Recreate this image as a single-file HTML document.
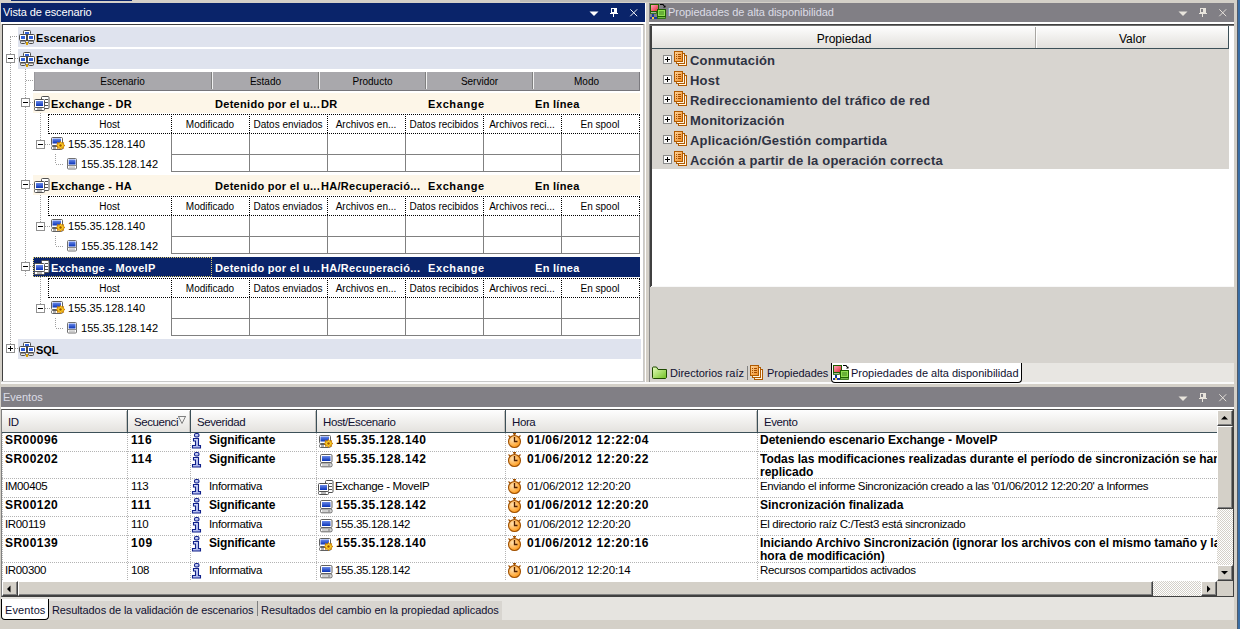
<!DOCTYPE html><html><head><meta charset="utf-8"><style>
html,body{margin:0;padding:0;width:1240px;height:629px;overflow:hidden;background:#d4d0c8}
body{position:relative;font-family:"Liberation Sans",sans-serif;font-size:11px}
div,svg{position:absolute}
.t{white-space:nowrap;line-height:13px}
</style></head><body><div style="left:0px;top:0px;width:1240px;height:629px;background:#d4d0c8"></div>
<div style="left:11px;top:0px;width:121px;height:1px;background:#0a246a"></div>
<div style="left:520px;top:0px;width:280px;height:2px;background:#bdbbb8"></div>
<div style="left:1px;top:3px;width:644px;height:19px;background:#0a246a"></div>
<div class="t" style="left:3px;top:6px;color:#fff;font-size:11px;letter-spacing:-0.1px">Vista de escenario</div>
<svg style="left:586px;top:5px" width="56" height="14" viewBox="0 0 56 14"><path d="M3.5 6.5 L12.5 6.5 L8 11 Z" fill="#fff"/><rect x="25" y="3" width="6" height="5" fill="#fff"/><rect x="26" y="4" width="2" height="3" fill="#0a246a"/><rect x="24" y="8" width="8" height="1" fill="#fff"/><rect x="27" y="9" width="1" height="3" fill="#fff"/><path d="M44.3 4.3 L51.2 11.2 M51.2 4.3 L44.3 11.2" stroke="#fff" stroke-width="0.95"/></svg>
<div style="left:1px;top:22px;width:644px;height:2px;background:#fff"></div>
<div style="left:2px;top:24px;width:642px;height:358px;background:#fff;border-top:1px solid #404040;border-left:1px solid #404040;border-right:1px solid #c8c8c8;border-bottom:1px solid #c8c8c8;box-sizing:border-box"></div>
<div style="left:645px;top:3px;width:1px;height:380px;background:#fff"></div>
<div style="left:18px;top:27px;width:623px;height:20px;background:#dfe3ee"></div>
<div style="left:10px;top:36px;width:8px;height:1px;background:repeating-linear-gradient(to right,#a0a0a0 0 1px,transparent 1px 2px) 0px 0"></div>
<div style="left:10px;top:37px;width:1px;height:309px;background:repeating-linear-gradient(to bottom,#a0a0a0 0 1px,transparent 1px 2px) 0 0px"></div>
<svg style="left:17px;top:28px" width="20" height="20" viewBox="0 0 20 20">
<rect x="6.5" y="2.5" width="7" height="4" rx="1" fill="#fff" stroke="#4a4a4a"/><rect x="8" y="4" width="4" height="2.5" fill="#2f5fd8"/>
<rect x="2.5" y="6.5" width="7" height="6" rx="1" fill="#fff" stroke="#4a4a4a"/><rect x="4" y="8" width="4" height="3" fill="#2f5fd8"/>
<rect x="10.5" y="6.5" width="7" height="6" rx="1" fill="#fff" stroke="#4a4a4a"/><rect x="12" y="8" width="4" height="3" fill="#2f5fd8"/>
<rect x="3.5" y="13" width="5" height="2.5" rx="1" fill="#e8e8e8" stroke="#4a4a4a"/><rect x="11.5" y="13" width="5" height="2.5" rx="1" fill="#e8e8e8" stroke="#4a4a4a"/>
<rect x="9" y="6" width="2" height="7" fill="#4a4a4a"/><rect x="9" y="14" width="2" height="3" fill="#d8a000"/></svg>
<div class="t" style="left:36px;top:32px;font-weight:bold;font-size:11px;letter-spacing:0.1px">Escenarios</div>
<div style="left:18px;top:49px;width:623px;height:20px;background:#dfe3ee"></div>
<div style="left:6px;top:54px;width:9px;height:9px;box-sizing:border-box;border:1px solid #919191;background:#fff"></div><div style="left:8px;top:58px;width:5px;height:1px;background:#000"></div>
<div style="left:15px;top:58px;width:3px;height:1px;background:repeating-linear-gradient(to right,#a0a0a0 0 1px,transparent 1px 2px) 0px 0"></div>
<svg style="left:17px;top:50px" width="20" height="20" viewBox="0 0 20 20">
<rect x="6.5" y="2.5" width="7" height="4" rx="1" fill="#fff" stroke="#4a4a4a"/><rect x="8" y="4" width="4" height="2.5" fill="#2f5fd8"/>
<rect x="2.5" y="6.5" width="7" height="6" rx="1" fill="#fff" stroke="#4a4a4a"/><rect x="4" y="8" width="4" height="3" fill="#2f5fd8"/>
<rect x="10.5" y="6.5" width="7" height="6" rx="1" fill="#fff" stroke="#4a4a4a"/><rect x="12" y="8" width="4" height="3" fill="#2f5fd8"/>
<rect x="3.5" y="13" width="5" height="2.5" rx="1" fill="#e8e8e8" stroke="#4a4a4a"/><rect x="11.5" y="13" width="5" height="2.5" rx="1" fill="#e8e8e8" stroke="#4a4a4a"/>
<rect x="9" y="6" width="2" height="7" fill="#4a4a4a"/><rect x="9" y="14" width="2" height="3" fill="#d8a000"/></svg>
<div class="t" style="left:36px;top:54px;font-weight:bold;font-size:11px;letter-spacing:0.2px">Exchange</div>
<div style="left:25px;top:69px;width:1px;height:207px;background:repeating-linear-gradient(to bottom,#a0a0a0 0 1px,transparent 1px 2px) 0 0px"></div>
<div style="left:26px;top:80px;width:7px;height:1px;background:repeating-linear-gradient(to right,#a0a0a0 0 1px,transparent 1px 2px) 0px 0"></div>
<div style="left:34px;top:72px;width:606px;height:19px;background:#a9a8ac;border-bottom:1px solid #76757a;border-left:1px solid #98979b;border-right:1px solid #7a797e;box-sizing:border-box"></div>
<div style="left:33px;top:90px;width:1px;height:1px;background:#76757a"></div>
<div class="t" style="left:33px;top:75px;width:179px;text-align:center;font-size:10px;color:#000">Escenario</div>
<div style="left:211px;top:72px;width:1px;height:17px;background:#808080"></div>
<div style="left:212px;top:72px;width:1px;height:17px;background:#f0f0f0"></div>
<div class="t" style="left:212px;top:75px;width:107px;text-align:center;font-size:10px;color:#000">Estado</div>
<div style="left:318px;top:72px;width:1px;height:17px;background:#808080"></div>
<div style="left:319px;top:72px;width:1px;height:17px;background:#f0f0f0"></div>
<div class="t" style="left:319px;top:75px;width:107px;text-align:center;font-size:10px;color:#000">Producto</div>
<div style="left:425px;top:72px;width:1px;height:17px;background:#808080"></div>
<div style="left:426px;top:72px;width:1px;height:17px;background:#f0f0f0"></div>
<div class="t" style="left:426px;top:75px;width:107px;text-align:center;font-size:10px;color:#000">Servidor</div>
<div style="left:532px;top:72px;width:1px;height:17px;background:#808080"></div>
<div style="left:533px;top:72px;width:1px;height:17px;background:#f0f0f0"></div>
<div class="t" style="left:533px;top:75px;width:107px;text-align:center;font-size:10px;color:#000">Modo</div>
<div style="left:33px;top:93px;width:607px;height:20px;background:#fdf6e8"></div>
<div style="left:21px;top:98px;width:9px;height:9px;box-sizing:border-box;border:1px solid #919191;background:#fff"></div><div style="left:23px;top:102px;width:5px;height:1px;background:#000"></div>
<div style="left:30px;top:102px;width:3px;height:1px;background:repeating-linear-gradient(to right,#a0a0a0 0 1px,transparent 1px 2px) 0px 0"></div>
<svg style="left:32px;top:94px" width="18" height="18" viewBox="0 0 18 18">
<rect x="9.5" y="2.5" width="7.5" height="12" rx="1" fill="#fff" stroke="#505050"/>
<line x1="13" y1="5.5" x2="16" y2="5.5" stroke="#505050"/><line x1="13" y1="8.5" x2="16" y2="8.5" stroke="#505050"/><line x1="13" y1="11.5" x2="16" y2="11.5" stroke="#505050"/>
<rect x="2.5" y="5.5" width="10" height="8" rx="1" fill="#fff" stroke="#505050"/>
<defs><linearGradient id="bl" x1="0" y1="0" x2="0" y2="1"><stop offset="0" stop-color="#6a8ae8"/><stop offset="1" stop-color="#0832b8"/></linearGradient></defs>
<rect x="4" y="7" width="7" height="5" fill="url(#bl)"/>
<rect x="2.5" y="13.5" width="10" height="3" rx="1" fill="#fff" stroke="#505050"/><line x1="5" y1="15" x2="10" y2="15" stroke="#707070"/></svg>
<div class="t" style="left:51px;top:98px;font-weight:bold;font-size:11px;letter-spacing:0.25px;color:#000">Exchange - DR</div>
<div class="t" style="left:215px;top:98px;font-weight:bold;font-size:11px;letter-spacing:0.3px;color:#000">Detenido por el u...</div>
<div class="t" style="left:321px;top:98px;font-weight:bold;font-size:11px;letter-spacing:0.3px;color:#000">DR</div>
<div class="t" style="left:428px;top:98px;font-weight:bold;font-size:11px;letter-spacing:0.6px;color:#000">Exchange</div>
<div class="t" style="left:535px;top:98px;font-weight:bold;font-size:11px;letter-spacing:0.3px;color:#000">En línea</div>
<div style="left:40px;top:113px;width:1px;height:27px;background:repeating-linear-gradient(to bottom,#a0a0a0 0 1px,transparent 1px 2px) 0 0px"></div>
<div style="left:48px;top:114px;width:592px;height:20px;box-sizing:border-box;border:1px dotted #000"></div>
<div class="t" style="left:48px;top:118px;width:123px;text-align:center;font-size:10px;color:#000">Host</div>
<div style="left:171px;top:114px;width:1px;height:20px;background:repeating-linear-gradient(to bottom,#000 0 1px,transparent 1px 2px) 0 0px"></div>
<div class="t" style="left:171px;top:118px;width:78px;text-align:center;font-size:10px;color:#000">Modificado</div>
<div style="left:249px;top:114px;width:1px;height:20px;background:repeating-linear-gradient(to bottom,#000 0 1px,transparent 1px 2px) 0 0px"></div>
<div class="t" style="left:249px;top:118px;width:78px;text-align:center;font-size:10px;color:#000">Datos enviados</div>
<div style="left:327px;top:114px;width:1px;height:20px;background:repeating-linear-gradient(to bottom,#000 0 1px,transparent 1px 2px) 0 0px"></div>
<div class="t" style="left:327px;top:118px;width:78px;text-align:center;font-size:10px;color:#000">Archivos en...</div>
<div style="left:405px;top:114px;width:1px;height:20px;background:repeating-linear-gradient(to bottom,#000 0 1px,transparent 1px 2px) 0 0px"></div>
<div class="t" style="left:405px;top:118px;width:78px;text-align:center;font-size:10px;color:#000">Datos recibidos</div>
<div style="left:483px;top:114px;width:1px;height:20px;background:repeating-linear-gradient(to bottom,#000 0 1px,transparent 1px 2px) 0 0px"></div>
<div class="t" style="left:483px;top:118px;width:78px;text-align:center;font-size:10px;color:#000">Archivos reci...</div>
<div style="left:561px;top:114px;width:1px;height:20px;background:repeating-linear-gradient(to bottom,#000 0 1px,transparent 1px 2px) 0 0px"></div>
<div class="t" style="left:561px;top:118px;width:78px;text-align:center;font-size:10px;color:#000">En spool</div>
<div style="left:171px;top:134px;width:469px;height:38px;box-sizing:border-box;border:1px solid #808080;border-top:none"></div>
<div style="left:171px;top:154px;width:469px;height:1px;background:#808080"></div>
<div style="left:249px;top:134px;width:1px;height:38px;background:#808080"></div>
<div style="left:327px;top:134px;width:1px;height:38px;background:#808080"></div>
<div style="left:405px;top:134px;width:1px;height:38px;background:#808080"></div>
<div style="left:483px;top:134px;width:1px;height:38px;background:#808080"></div>
<div style="left:561px;top:134px;width:1px;height:38px;background:#808080"></div>
<div style="left:36px;top:140px;width:9px;height:9px;box-sizing:border-box;border:1px solid #919191;background:#fff"></div><div style="left:38px;top:144px;width:5px;height:1px;background:#000"></div>
<div style="left:45px;top:144px;width:5px;height:1px;background:repeating-linear-gradient(to right,#a0a0a0 0 1px,transparent 1px 2px) 0px 0"></div>
<svg style="left:50px;top:137px" width="16" height="16" viewBox="0 0 16 16">
<rect x="1.5" y="0.5" width="11" height="8" rx="1" fill="#fff" stroke="#606060"/><rect x="2.5" y="1.5" width="8.5" height="5" fill="url(#bl)"/>
<rect x="1.5" y="9.5" width="11" height="3" rx="1" fill="#fff" stroke="#606060"/><line x1="3" y1="11" x2="6" y2="11" stroke="#606060"/>
<path d="M10.5 4.5 L11.6 6.2 L13.6 5.6 L13.2 7.6 L15 8.5 L13.2 9.4 L13.6 11.4 L11.6 10.8 L10.5 12.5 L9.4 10.8 L7.4 11.4 L7.8 9.4 L6 8.5 L7.8 7.6 L7.4 5.6 L9.4 6.2 Z" fill="#fcd020" stroke="#c87800" stroke-width="0.9"/>
<circle cx="10.5" cy="8.5" r="1.2" fill="#a05000"/></svg>
<div class="t" style="left:68px;top:138px;font-size:11px;letter-spacing:0.05px">155.35.128.140</div>
<div style="left:55px;top:154px;width:1px;height:10px;background:repeating-linear-gradient(to bottom,#a0a0a0 0 1px,transparent 1px 2px) 0 0px"></div>
<div style="left:56px;top:164px;width:8px;height:1px;background:repeating-linear-gradient(to right,#a0a0a0 0 1px,transparent 1px 2px) 0px 0"></div>
<svg style="left:67px;top:158px" width="11" height="12" viewBox="0 0 11 12">
<rect x="0.5" y="0.5" width="9" height="10.5" rx="1" fill="#fff" stroke="#707070"/><rect x="1.7" y="1.5" width="6.8" height="5" fill="url(#bl)"/>
<line x1="0.5" y1="7.5" x2="9.5" y2="7.5" stroke="#8a8a8a"/><rect x="2" y="8.5" width="6" height="1.2" fill="#b8b8b8"/></svg>
<div class="t" style="left:81px;top:158px;font-size:11px;letter-spacing:0.05px">155.35.128.142</div>
<div style="left:33px;top:175px;width:607px;height:20px;background:#fdf6e8"></div>
<div style="left:21px;top:180px;width:9px;height:9px;box-sizing:border-box;border:1px solid #919191;background:#fff"></div><div style="left:23px;top:184px;width:5px;height:1px;background:#000"></div>
<div style="left:30px;top:184px;width:3px;height:1px;background:repeating-linear-gradient(to right,#a0a0a0 0 1px,transparent 1px 2px) 0px 0"></div>
<svg style="left:32px;top:176px" width="18" height="18" viewBox="0 0 18 18">
<rect x="9.5" y="2.5" width="7.5" height="12" rx="1" fill="#fff" stroke="#505050"/>
<line x1="13" y1="5.5" x2="16" y2="5.5" stroke="#505050"/><line x1="13" y1="8.5" x2="16" y2="8.5" stroke="#505050"/><line x1="13" y1="11.5" x2="16" y2="11.5" stroke="#505050"/>
<rect x="2.5" y="5.5" width="10" height="8" rx="1" fill="#fff" stroke="#505050"/>
<defs><linearGradient id="bl" x1="0" y1="0" x2="0" y2="1"><stop offset="0" stop-color="#6a8ae8"/><stop offset="1" stop-color="#0832b8"/></linearGradient></defs>
<rect x="4" y="7" width="7" height="5" fill="url(#bl)"/>
<rect x="2.5" y="13.5" width="10" height="3" rx="1" fill="#fff" stroke="#505050"/><line x1="5" y1="15" x2="10" y2="15" stroke="#707070"/></svg>
<div class="t" style="left:51px;top:180px;font-weight:bold;font-size:11px;letter-spacing:0.25px;color:#000">Exchange - HA</div>
<div class="t" style="left:215px;top:180px;font-weight:bold;font-size:11px;letter-spacing:0.3px;color:#000">Detenido por el u...</div>
<div class="t" style="left:321px;top:180px;font-weight:bold;font-size:11px;letter-spacing:0.3px;color:#000">HA/Recuperació...</div>
<div class="t" style="left:428px;top:180px;font-weight:bold;font-size:11px;letter-spacing:0.6px;color:#000">Exchange</div>
<div class="t" style="left:535px;top:180px;font-weight:bold;font-size:11px;letter-spacing:0.3px;color:#000">En línea</div>
<div style="left:40px;top:195px;width:1px;height:27px;background:repeating-linear-gradient(to bottom,#a0a0a0 0 1px,transparent 1px 2px) 0 0px"></div>
<div style="left:48px;top:196px;width:592px;height:20px;box-sizing:border-box;border:1px dotted #000"></div>
<div class="t" style="left:48px;top:200px;width:123px;text-align:center;font-size:10px;color:#000">Host</div>
<div style="left:171px;top:196px;width:1px;height:20px;background:repeating-linear-gradient(to bottom,#000 0 1px,transparent 1px 2px) 0 0px"></div>
<div class="t" style="left:171px;top:200px;width:78px;text-align:center;font-size:10px;color:#000">Modificado</div>
<div style="left:249px;top:196px;width:1px;height:20px;background:repeating-linear-gradient(to bottom,#000 0 1px,transparent 1px 2px) 0 0px"></div>
<div class="t" style="left:249px;top:200px;width:78px;text-align:center;font-size:10px;color:#000">Datos enviados</div>
<div style="left:327px;top:196px;width:1px;height:20px;background:repeating-linear-gradient(to bottom,#000 0 1px,transparent 1px 2px) 0 0px"></div>
<div class="t" style="left:327px;top:200px;width:78px;text-align:center;font-size:10px;color:#000">Archivos en...</div>
<div style="left:405px;top:196px;width:1px;height:20px;background:repeating-linear-gradient(to bottom,#000 0 1px,transparent 1px 2px) 0 0px"></div>
<div class="t" style="left:405px;top:200px;width:78px;text-align:center;font-size:10px;color:#000">Datos recibidos</div>
<div style="left:483px;top:196px;width:1px;height:20px;background:repeating-linear-gradient(to bottom,#000 0 1px,transparent 1px 2px) 0 0px"></div>
<div class="t" style="left:483px;top:200px;width:78px;text-align:center;font-size:10px;color:#000">Archivos reci...</div>
<div style="left:561px;top:196px;width:1px;height:20px;background:repeating-linear-gradient(to bottom,#000 0 1px,transparent 1px 2px) 0 0px"></div>
<div class="t" style="left:561px;top:200px;width:78px;text-align:center;font-size:10px;color:#000">En spool</div>
<div style="left:171px;top:216px;width:469px;height:38px;box-sizing:border-box;border:1px solid #808080;border-top:none"></div>
<div style="left:171px;top:236px;width:469px;height:1px;background:#808080"></div>
<div style="left:249px;top:216px;width:1px;height:38px;background:#808080"></div>
<div style="left:327px;top:216px;width:1px;height:38px;background:#808080"></div>
<div style="left:405px;top:216px;width:1px;height:38px;background:#808080"></div>
<div style="left:483px;top:216px;width:1px;height:38px;background:#808080"></div>
<div style="left:561px;top:216px;width:1px;height:38px;background:#808080"></div>
<div style="left:36px;top:222px;width:9px;height:9px;box-sizing:border-box;border:1px solid #919191;background:#fff"></div><div style="left:38px;top:226px;width:5px;height:1px;background:#000"></div>
<div style="left:45px;top:226px;width:5px;height:1px;background:repeating-linear-gradient(to right,#a0a0a0 0 1px,transparent 1px 2px) 0px 0"></div>
<svg style="left:50px;top:219px" width="16" height="16" viewBox="0 0 16 16">
<rect x="1.5" y="0.5" width="11" height="8" rx="1" fill="#fff" stroke="#606060"/><rect x="2.5" y="1.5" width="8.5" height="5" fill="url(#bl)"/>
<rect x="1.5" y="9.5" width="11" height="3" rx="1" fill="#fff" stroke="#606060"/><line x1="3" y1="11" x2="6" y2="11" stroke="#606060"/>
<path d="M10.5 4.5 L11.6 6.2 L13.6 5.6 L13.2 7.6 L15 8.5 L13.2 9.4 L13.6 11.4 L11.6 10.8 L10.5 12.5 L9.4 10.8 L7.4 11.4 L7.8 9.4 L6 8.5 L7.8 7.6 L7.4 5.6 L9.4 6.2 Z" fill="#fcd020" stroke="#c87800" stroke-width="0.9"/>
<circle cx="10.5" cy="8.5" r="1.2" fill="#a05000"/></svg>
<div class="t" style="left:68px;top:220px;font-size:11px;letter-spacing:0.05px">155.35.128.140</div>
<div style="left:55px;top:236px;width:1px;height:10px;background:repeating-linear-gradient(to bottom,#a0a0a0 0 1px,transparent 1px 2px) 0 0px"></div>
<div style="left:56px;top:246px;width:8px;height:1px;background:repeating-linear-gradient(to right,#a0a0a0 0 1px,transparent 1px 2px) 0px 0"></div>
<svg style="left:67px;top:240px" width="11" height="12" viewBox="0 0 11 12">
<rect x="0.5" y="0.5" width="9" height="10.5" rx="1" fill="#fff" stroke="#707070"/><rect x="1.7" y="1.5" width="6.8" height="5" fill="url(#bl)"/>
<line x1="0.5" y1="7.5" x2="9.5" y2="7.5" stroke="#8a8a8a"/><rect x="2" y="8.5" width="6" height="1.2" fill="#b8b8b8"/></svg>
<div class="t" style="left:81px;top:240px;font-size:11px;letter-spacing:0.05px">155.35.128.142</div>
<div style="left:33px;top:257px;width:607px;height:20px;background:#0a246a"></div>
<div style="left:21px;top:262px;width:9px;height:9px;box-sizing:border-box;border:1px solid #919191;background:#fff"></div><div style="left:23px;top:266px;width:5px;height:1px;background:#000"></div>
<div style="left:30px;top:266px;width:3px;height:1px;background:repeating-linear-gradient(to right,#a0a0a0 0 1px,transparent 1px 2px) 0px 0"></div>
<svg style="left:32px;top:258px" width="18" height="18" viewBox="0 0 18 18">
<rect x="9.5" y="2.5" width="7.5" height="12" rx="1" fill="#fff" stroke="#505050"/>
<line x1="13" y1="5.5" x2="16" y2="5.5" stroke="#505050"/><line x1="13" y1="8.5" x2="16" y2="8.5" stroke="#505050"/><line x1="13" y1="11.5" x2="16" y2="11.5" stroke="#505050"/>
<rect x="2.5" y="5.5" width="10" height="8" rx="1" fill="#fff" stroke="#505050"/>
<defs><linearGradient id="bl" x1="0" y1="0" x2="0" y2="1"><stop offset="0" stop-color="#6a8ae8"/><stop offset="1" stop-color="#0832b8"/></linearGradient></defs>
<rect x="4" y="7" width="7" height="5" fill="url(#bl)"/>
<rect x="2.5" y="13.5" width="10" height="3" rx="1" fill="#fff" stroke="#505050"/><line x1="5" y1="15" x2="10" y2="15" stroke="#707070"/></svg>
<div style="left:33px;top:257px;width:179px;height:20px;box-sizing:border-box;border:1px dotted #d8c870"></div>
<div class="t" style="left:51px;top:262px;font-weight:bold;font-size:11px;letter-spacing:0.25px;color:#fff">Exchange - MoveIP</div>
<div class="t" style="left:215px;top:262px;font-weight:bold;font-size:11px;letter-spacing:0.3px;color:#fff">Detenido por el u...</div>
<div class="t" style="left:321px;top:262px;font-weight:bold;font-size:11px;letter-spacing:0.3px;color:#fff">HA/Recuperació...</div>
<div class="t" style="left:428px;top:262px;font-weight:bold;font-size:11px;letter-spacing:0.6px;color:#fff">Exchange</div>
<div class="t" style="left:535px;top:262px;font-weight:bold;font-size:11px;letter-spacing:0.3px;color:#fff">En línea</div>
<div style="left:40px;top:277px;width:1px;height:27px;background:repeating-linear-gradient(to bottom,#a0a0a0 0 1px,transparent 1px 2px) 0 0px"></div>
<div style="left:48px;top:278px;width:592px;height:20px;box-sizing:border-box;border:1px dotted #000"></div>
<div class="t" style="left:48px;top:282px;width:123px;text-align:center;font-size:10px;color:#000">Host</div>
<div style="left:171px;top:278px;width:1px;height:20px;background:repeating-linear-gradient(to bottom,#000 0 1px,transparent 1px 2px) 0 0px"></div>
<div class="t" style="left:171px;top:282px;width:78px;text-align:center;font-size:10px;color:#000">Modificado</div>
<div style="left:249px;top:278px;width:1px;height:20px;background:repeating-linear-gradient(to bottom,#000 0 1px,transparent 1px 2px) 0 0px"></div>
<div class="t" style="left:249px;top:282px;width:78px;text-align:center;font-size:10px;color:#000">Datos enviados</div>
<div style="left:327px;top:278px;width:1px;height:20px;background:repeating-linear-gradient(to bottom,#000 0 1px,transparent 1px 2px) 0 0px"></div>
<div class="t" style="left:327px;top:282px;width:78px;text-align:center;font-size:10px;color:#000">Archivos en...</div>
<div style="left:405px;top:278px;width:1px;height:20px;background:repeating-linear-gradient(to bottom,#000 0 1px,transparent 1px 2px) 0 0px"></div>
<div class="t" style="left:405px;top:282px;width:78px;text-align:center;font-size:10px;color:#000">Datos recibidos</div>
<div style="left:483px;top:278px;width:1px;height:20px;background:repeating-linear-gradient(to bottom,#000 0 1px,transparent 1px 2px) 0 0px"></div>
<div class="t" style="left:483px;top:282px;width:78px;text-align:center;font-size:10px;color:#000">Archivos reci...</div>
<div style="left:561px;top:278px;width:1px;height:20px;background:repeating-linear-gradient(to bottom,#000 0 1px,transparent 1px 2px) 0 0px"></div>
<div class="t" style="left:561px;top:282px;width:78px;text-align:center;font-size:10px;color:#000">En spool</div>
<div style="left:171px;top:298px;width:469px;height:38px;box-sizing:border-box;border:1px solid #808080;border-top:none"></div>
<div style="left:171px;top:318px;width:469px;height:1px;background:#808080"></div>
<div style="left:249px;top:298px;width:1px;height:38px;background:#808080"></div>
<div style="left:327px;top:298px;width:1px;height:38px;background:#808080"></div>
<div style="left:405px;top:298px;width:1px;height:38px;background:#808080"></div>
<div style="left:483px;top:298px;width:1px;height:38px;background:#808080"></div>
<div style="left:561px;top:298px;width:1px;height:38px;background:#808080"></div>
<div style="left:36px;top:304px;width:9px;height:9px;box-sizing:border-box;border:1px solid #919191;background:#fff"></div><div style="left:38px;top:308px;width:5px;height:1px;background:#000"></div>
<div style="left:45px;top:308px;width:5px;height:1px;background:repeating-linear-gradient(to right,#a0a0a0 0 1px,transparent 1px 2px) 0px 0"></div>
<svg style="left:50px;top:301px" width="16" height="16" viewBox="0 0 16 16">
<rect x="1.5" y="0.5" width="11" height="8" rx="1" fill="#fff" stroke="#606060"/><rect x="2.5" y="1.5" width="8.5" height="5" fill="url(#bl)"/>
<rect x="1.5" y="9.5" width="11" height="3" rx="1" fill="#fff" stroke="#606060"/><line x1="3" y1="11" x2="6" y2="11" stroke="#606060"/>
<path d="M10.5 4.5 L11.6 6.2 L13.6 5.6 L13.2 7.6 L15 8.5 L13.2 9.4 L13.6 11.4 L11.6 10.8 L10.5 12.5 L9.4 10.8 L7.4 11.4 L7.8 9.4 L6 8.5 L7.8 7.6 L7.4 5.6 L9.4 6.2 Z" fill="#fcd020" stroke="#c87800" stroke-width="0.9"/>
<circle cx="10.5" cy="8.5" r="1.2" fill="#a05000"/></svg>
<div class="t" style="left:68px;top:302px;font-size:11px;letter-spacing:0.05px">155.35.128.140</div>
<div style="left:55px;top:318px;width:1px;height:10px;background:repeating-linear-gradient(to bottom,#a0a0a0 0 1px,transparent 1px 2px) 0 0px"></div>
<div style="left:56px;top:328px;width:8px;height:1px;background:repeating-linear-gradient(to right,#a0a0a0 0 1px,transparent 1px 2px) 0px 0"></div>
<svg style="left:67px;top:322px" width="11" height="12" viewBox="0 0 11 12">
<rect x="0.5" y="0.5" width="9" height="10.5" rx="1" fill="#fff" stroke="#707070"/><rect x="1.7" y="1.5" width="6.8" height="5" fill="url(#bl)"/>
<line x1="0.5" y1="7.5" x2="9.5" y2="7.5" stroke="#8a8a8a"/><rect x="2" y="8.5" width="6" height="1.2" fill="#b8b8b8"/></svg>
<div class="t" style="left:81px;top:322px;font-size:11px;letter-spacing:0.05px">155.35.128.142</div>
<div style="left:18px;top:339px;width:623px;height:20px;background:#dfe3ee"></div>
<div style="left:6px;top:344px;width:9px;height:9px;box-sizing:border-box;border:1px solid #919191;background:#fff"></div><div style="left:8px;top:348px;width:5px;height:1px;background:#000"></div><div style="left:10px;top:346px;width:1px;height:5px;background:#000"></div>
<div style="left:15px;top:348px;width:3px;height:1px;background:repeating-linear-gradient(to right,#a0a0a0 0 1px,transparent 1px 2px) 0px 0"></div>
<svg style="left:17px;top:340px" width="20" height="20" viewBox="0 0 20 20">
<rect x="6.5" y="2.5" width="7" height="4" rx="1" fill="#fff" stroke="#4a4a4a"/><rect x="8" y="4" width="4" height="2.5" fill="#2f5fd8"/>
<rect x="2.5" y="6.5" width="7" height="6" rx="1" fill="#fff" stroke="#4a4a4a"/><rect x="4" y="8" width="4" height="3" fill="#2f5fd8"/>
<rect x="10.5" y="6.5" width="7" height="6" rx="1" fill="#fff" stroke="#4a4a4a"/><rect x="12" y="8" width="4" height="3" fill="#2f5fd8"/>
<rect x="3.5" y="13" width="5" height="2.5" rx="1" fill="#e8e8e8" stroke="#4a4a4a"/><rect x="11.5" y="13" width="5" height="2.5" rx="1" fill="#e8e8e8" stroke="#4a4a4a"/>
<rect x="9" y="6" width="2" height="7" fill="#4a4a4a"/><rect x="9" y="14" width="2" height="3" fill="#d8a000"/></svg>
<div class="t" style="left:36px;top:344px;font-weight:bold;font-size:11px;letter-spacing:-0.1px">SQL</div>
<div style="left:649px;top:3px;width:585px;height:19px;background:#817f85"></div>
<svg style="left:648px;top:2px" width="20" height="20" viewBox="0 0 20 20">
<defs><linearGradient id="rg" x1="0" y1="0" x2="1" y2="1"><stop offset="0" stop-color="#ffb0c0"/><stop offset="1" stop-color="#e02030"/></linearGradient></defs>
<rect x="2.5" y="2.5" width="8" height="7" fill="url(#rg)" stroke="#1e6000"/>
<rect x="2.5" y="10" width="6" height="1.5" fill="#fff" stroke="#1e6000" stroke-width="0.8"/>
<rect x="4" y="12" width="2" height="5" fill="#1a3aa0"/><rect x="2" y="15" width="7" height="2" fill="#1a3aa0"/><rect x="4" y="15" width="2" height="2" fill="#f8c840"/>
<rect x="9.5" y="7.5" width="8" height="7" fill="#90e050" stroke="#1e6000"/><rect x="11" y="9" width="5" height="4" fill="#68b038"/>
<rect x="9.5" y="15" width="8" height="1.5" fill="#b0f080" stroke="#1e6000" stroke-width="0.8"/>
<path d="M12 2.5 L15 2.5 L17 5" stroke="#000" stroke-width="1.2" fill="none"/><path d="M15 5.5 L17.5 5.5 L17.5 3.5 Z" fill="#000"/></svg>
<div class="t" style="left:668px;top:6px;color:#dcdce6;font-size:11px;letter-spacing:-0.05px">Propiedades de alta disponibilidad</div>
<svg style="left:1175px;top:5px" width="56" height="14" viewBox="0 0 56 14"><path d="M3.5 6.5 L12.5 6.5 L8 11 Z" fill="#e8e4dc"/><rect x="25" y="3" width="6" height="5" fill="#e8e4dc"/><rect x="26" y="4" width="2" height="3" fill="#817f85"/><rect x="24" y="8" width="8" height="1" fill="#e8e4dc"/><rect x="27" y="9" width="1" height="3" fill="#e8e4dc"/><path d="M44.3 4.3 L51.2 11.2 M51.2 4.3 L44.3 11.2" stroke="#e8e4dc" stroke-width="0.95"/></svg>
<div style="left:649px;top:22px;width:586px;height:2px;background:#fff"></div>
<div style="left:649px;top:24px;width:1px;height:360px;background:#8a8a8a"></div>
<div style="left:650px;top:24px;width:584px;height:263px;background:#fff;border-top:1px solid #404040;border-left:2px solid #404040;box-sizing:border-box"></div>
<div style="left:650px;top:25px;width:584px;height:1px;background:#707070"></div>
<div style="left:652px;top:26px;width:577px;height:23px;background:linear-gradient(#fefefe,#e2e0dc);border-bottom:1px solid #3c5058;border-right:1px solid #3c5058;box-sizing:border-box"></div>
<div style="left:1035px;top:27px;width:1px;height:21px;background:#a8a6a2"></div>
<div style="left:1036px;top:26px;width:1px;height:22px;background:#fff"></div>
<div style="left:1229px;top:26px;width:5px;height:261px;background:#fff"></div>
<div class="t" style="left:652px;top:33px;width:384px;text-align:center;font-size:12px;color:#000">Propiedad</div>
<div class="t" style="left:1037px;top:33px;width:191px;text-align:center;font-size:12px;color:#000">Valor</div>
<div style="left:652px;top:49px;width:577px;height:120px;background:#d8d5d0"></div>
<div style="left:663px;top:55px;width:9px;height:9px;box-sizing:border-box;border:1px solid #8a8a8a;background:#f8f8f8"></div><div style="left:665px;top:59px;width:5px;height:1px;background:#000"></div><div style="left:667px;top:57px;width:1px;height:5px;background:#000"></div>
<svg style="left:672px;top:49px" width="16" height="18" viewBox="0 0 16 18">
<rect x="6.5" y="6.5" width="8" height="10" fill="#fff4e0" stroke="#b05a00"/>
<rect x="4.5" y="4.5" width="8" height="10" fill="#fff4e0" stroke="#b05a00"/>
<defs><linearGradient id="og" x1="0" y1="0" x2="1" y2="1"><stop offset="0" stop-color="#ffd8a0"/><stop offset="1" stop-color="#f08a20"/></linearGradient></defs>
<rect x="2.5" y="2.5" width="8" height="10" fill="url(#og)" stroke="#b05a00"/>
<rect x="4" y="5" width="1" height="1" fill="#a04a00"/><rect x="6" y="5" width="3" height="1" fill="#a04a00"/>
<rect x="4" y="7" width="1" height="1" fill="#a04a00"/><rect x="6" y="7" width="3" height="1" fill="#a04a00"/>
<rect x="4" y="9" width="1" height="1" fill="#a04a00"/><rect x="6" y="9" width="3" height="1" fill="#a04a00"/></svg>
<div class="t" style="left:690px;top:54px;font-weight:bold;font-size:13px;color:#2e3242;letter-spacing:0.2px">Conmutación</div>
<div style="left:663px;top:75px;width:9px;height:9px;box-sizing:border-box;border:1px solid #8a8a8a;background:#f8f8f8"></div><div style="left:665px;top:79px;width:5px;height:1px;background:#000"></div><div style="left:667px;top:77px;width:1px;height:5px;background:#000"></div>
<svg style="left:672px;top:69px" width="16" height="18" viewBox="0 0 16 18">
<rect x="6.5" y="6.5" width="8" height="10" fill="#fff4e0" stroke="#b05a00"/>
<rect x="4.5" y="4.5" width="8" height="10" fill="#fff4e0" stroke="#b05a00"/>
<defs><linearGradient id="og" x1="0" y1="0" x2="1" y2="1"><stop offset="0" stop-color="#ffd8a0"/><stop offset="1" stop-color="#f08a20"/></linearGradient></defs>
<rect x="2.5" y="2.5" width="8" height="10" fill="url(#og)" stroke="#b05a00"/>
<rect x="4" y="5" width="1" height="1" fill="#a04a00"/><rect x="6" y="5" width="3" height="1" fill="#a04a00"/>
<rect x="4" y="7" width="1" height="1" fill="#a04a00"/><rect x="6" y="7" width="3" height="1" fill="#a04a00"/>
<rect x="4" y="9" width="1" height="1" fill="#a04a00"/><rect x="6" y="9" width="3" height="1" fill="#a04a00"/></svg>
<div class="t" style="left:690px;top:74px;font-weight:bold;font-size:13px;color:#2e3242;letter-spacing:0.2px">Host</div>
<div style="left:663px;top:95px;width:9px;height:9px;box-sizing:border-box;border:1px solid #8a8a8a;background:#f8f8f8"></div><div style="left:665px;top:99px;width:5px;height:1px;background:#000"></div><div style="left:667px;top:97px;width:1px;height:5px;background:#000"></div>
<svg style="left:672px;top:89px" width="16" height="18" viewBox="0 0 16 18">
<rect x="6.5" y="6.5" width="8" height="10" fill="#fff4e0" stroke="#b05a00"/>
<rect x="4.5" y="4.5" width="8" height="10" fill="#fff4e0" stroke="#b05a00"/>
<defs><linearGradient id="og" x1="0" y1="0" x2="1" y2="1"><stop offset="0" stop-color="#ffd8a0"/><stop offset="1" stop-color="#f08a20"/></linearGradient></defs>
<rect x="2.5" y="2.5" width="8" height="10" fill="url(#og)" stroke="#b05a00"/>
<rect x="4" y="5" width="1" height="1" fill="#a04a00"/><rect x="6" y="5" width="3" height="1" fill="#a04a00"/>
<rect x="4" y="7" width="1" height="1" fill="#a04a00"/><rect x="6" y="7" width="3" height="1" fill="#a04a00"/>
<rect x="4" y="9" width="1" height="1" fill="#a04a00"/><rect x="6" y="9" width="3" height="1" fill="#a04a00"/></svg>
<div class="t" style="left:690px;top:94px;font-weight:bold;font-size:13px;color:#2e3242;letter-spacing:0.2px">Redireccionamiento del tráfico de red</div>
<div style="left:663px;top:115px;width:9px;height:9px;box-sizing:border-box;border:1px solid #8a8a8a;background:#f8f8f8"></div><div style="left:665px;top:119px;width:5px;height:1px;background:#000"></div><div style="left:667px;top:117px;width:1px;height:5px;background:#000"></div>
<svg style="left:672px;top:109px" width="16" height="18" viewBox="0 0 16 18">
<rect x="6.5" y="6.5" width="8" height="10" fill="#fff4e0" stroke="#b05a00"/>
<rect x="4.5" y="4.5" width="8" height="10" fill="#fff4e0" stroke="#b05a00"/>
<defs><linearGradient id="og" x1="0" y1="0" x2="1" y2="1"><stop offset="0" stop-color="#ffd8a0"/><stop offset="1" stop-color="#f08a20"/></linearGradient></defs>
<rect x="2.5" y="2.5" width="8" height="10" fill="url(#og)" stroke="#b05a00"/>
<rect x="4" y="5" width="1" height="1" fill="#a04a00"/><rect x="6" y="5" width="3" height="1" fill="#a04a00"/>
<rect x="4" y="7" width="1" height="1" fill="#a04a00"/><rect x="6" y="7" width="3" height="1" fill="#a04a00"/>
<rect x="4" y="9" width="1" height="1" fill="#a04a00"/><rect x="6" y="9" width="3" height="1" fill="#a04a00"/></svg>
<div class="t" style="left:690px;top:114px;font-weight:bold;font-size:13px;color:#2e3242;letter-spacing:0.2px">Monitorización</div>
<div style="left:663px;top:135px;width:9px;height:9px;box-sizing:border-box;border:1px solid #8a8a8a;background:#f8f8f8"></div><div style="left:665px;top:139px;width:5px;height:1px;background:#000"></div><div style="left:667px;top:137px;width:1px;height:5px;background:#000"></div>
<svg style="left:672px;top:129px" width="16" height="18" viewBox="0 0 16 18">
<rect x="6.5" y="6.5" width="8" height="10" fill="#fff4e0" stroke="#b05a00"/>
<rect x="4.5" y="4.5" width="8" height="10" fill="#fff4e0" stroke="#b05a00"/>
<defs><linearGradient id="og" x1="0" y1="0" x2="1" y2="1"><stop offset="0" stop-color="#ffd8a0"/><stop offset="1" stop-color="#f08a20"/></linearGradient></defs>
<rect x="2.5" y="2.5" width="8" height="10" fill="url(#og)" stroke="#b05a00"/>
<rect x="4" y="5" width="1" height="1" fill="#a04a00"/><rect x="6" y="5" width="3" height="1" fill="#a04a00"/>
<rect x="4" y="7" width="1" height="1" fill="#a04a00"/><rect x="6" y="7" width="3" height="1" fill="#a04a00"/>
<rect x="4" y="9" width="1" height="1" fill="#a04a00"/><rect x="6" y="9" width="3" height="1" fill="#a04a00"/></svg>
<div class="t" style="left:690px;top:134px;font-weight:bold;font-size:13px;color:#2e3242;letter-spacing:0.2px">Aplicación/Gestión compartida</div>
<div style="left:663px;top:155px;width:9px;height:9px;box-sizing:border-box;border:1px solid #8a8a8a;background:#f8f8f8"></div><div style="left:665px;top:159px;width:5px;height:1px;background:#000"></div><div style="left:667px;top:157px;width:1px;height:5px;background:#000"></div>
<svg style="left:672px;top:149px" width="16" height="18" viewBox="0 0 16 18">
<rect x="6.5" y="6.5" width="8" height="10" fill="#fff4e0" stroke="#b05a00"/>
<rect x="4.5" y="4.5" width="8" height="10" fill="#fff4e0" stroke="#b05a00"/>
<defs><linearGradient id="og" x1="0" y1="0" x2="1" y2="1"><stop offset="0" stop-color="#ffd8a0"/><stop offset="1" stop-color="#f08a20"/></linearGradient></defs>
<rect x="2.5" y="2.5" width="8" height="10" fill="url(#og)" stroke="#b05a00"/>
<rect x="4" y="5" width="1" height="1" fill="#a04a00"/><rect x="6" y="5" width="3" height="1" fill="#a04a00"/>
<rect x="4" y="7" width="1" height="1" fill="#a04a00"/><rect x="6" y="7" width="3" height="1" fill="#a04a00"/>
<rect x="4" y="9" width="1" height="1" fill="#a04a00"/><rect x="6" y="9" width="3" height="1" fill="#a04a00"/></svg>
<div class="t" style="left:690px;top:154px;font-weight:bold;font-size:13px;color:#2e3242;letter-spacing:0.2px">Acción a partir de la operación correcta</div>
<div style="left:650px;top:287px;width:584px;height:97px;background:#d6d3ce"></div>
<div style="left:651px;top:286px;width:583px;height:1px;background:#f8f8f8"></div>
<div style="left:1022px;top:363px;width:212px;height:20px;background:#e8e6e2"></div>
<svg style="left:652px;top:366px" width="16" height="14" viewBox="0 0 16 14">
<defs><linearGradient id="fg" x1="0" y1="0" x2="1" y2="1"><stop offset="0" stop-color="#e8ffc0"/><stop offset="1" stop-color="#70c020"/></linearGradient></defs>
<path d="M0.5 1.5 L0.5 11.5 Q0.5 12.5 1.5 12.5 L13.5 12.5 L14.5 11.5 L14.5 3.5 L6 3.5 L4.5 1 L1 1 Z" fill="url(#fg)" stroke="#1e4a00"/></svg>
<div class="t" style="left:670px;top:367px;font-size:11px;color:#101030;letter-spacing:0px">Directorios raíz</div>
<div style="left:747px;top:366px;width:1px;height:14px;background:#808080"></div>
<svg style="left:748px;top:363px" width="16" height="18" viewBox="0 0 16 18">
<rect x="6.5" y="6.5" width="8" height="10" fill="#fff4e0" stroke="#b05a00"/>
<rect x="4.5" y="4.5" width="8" height="10" fill="#fff4e0" stroke="#b05a00"/>
<defs><linearGradient id="og" x1="0" y1="0" x2="1" y2="1"><stop offset="0" stop-color="#ffd8a0"/><stop offset="1" stop-color="#f08a20"/></linearGradient></defs>
<rect x="2.5" y="2.5" width="8" height="10" fill="url(#og)" stroke="#b05a00"/>
<rect x="4" y="5" width="1" height="1" fill="#a04a00"/><rect x="6" y="5" width="3" height="1" fill="#a04a00"/>
<rect x="4" y="7" width="1" height="1" fill="#a04a00"/><rect x="6" y="7" width="3" height="1" fill="#a04a00"/>
<rect x="4" y="9" width="1" height="1" fill="#a04a00"/><rect x="6" y="9" width="3" height="1" fill="#a04a00"/></svg>
<div class="t" style="left:767px;top:367px;font-size:11px;color:#101030;letter-spacing:-0.05px">Propiedades</div>
<div style="left:1234px;top:3px;width:4px;height:626px;background:#d4d0c8"></div>
<div style="left:1px;top:381px;width:644px;height:1px;background:#c8c8c8"></div>
<div style="left:1px;top:382px;width:1233px;height:2px;background:#fafafa"></div>
<div style="left:1px;top:384px;width:1233px;height:3px;background:#d4d0c8"></div>
<div style="left:831px;top:363px;width:191px;height:20px;box-sizing:border-box;background:#fff;border:1px solid #000;border-top:none;border-radius:0 0 4px 4px"></div>
<svg style="left:831px;top:363px" width="20" height="20" viewBox="0 0 20 20">
<defs><linearGradient id="rg" x1="0" y1="0" x2="1" y2="1"><stop offset="0" stop-color="#ffb0c0"/><stop offset="1" stop-color="#e02030"/></linearGradient></defs>
<rect x="2.5" y="2.5" width="8" height="7" fill="url(#rg)" stroke="#1e6000"/>
<rect x="2.5" y="10" width="6" height="1.5" fill="#fff" stroke="#1e6000" stroke-width="0.8"/>
<rect x="4" y="12" width="2" height="5" fill="#1a3aa0"/><rect x="2" y="15" width="7" height="2" fill="#1a3aa0"/><rect x="4" y="15" width="2" height="2" fill="#f8c840"/>
<rect x="9.5" y="7.5" width="8" height="7" fill="#90e050" stroke="#1e6000"/><rect x="11" y="9" width="5" height="4" fill="#68b038"/>
<rect x="9.5" y="15" width="8" height="1.5" fill="#b0f080" stroke="#1e6000" stroke-width="0.8"/>
<path d="M12 2.5 L15 2.5 L17 5" stroke="#000" stroke-width="1.2" fill="none"/><path d="M15 5.5 L17.5 5.5 L17.5 3.5 Z" fill="#000"/></svg>
<div class="t" style="left:851px;top:367px;font-size:11px;color:#101030;letter-spacing:0px">Propiedades de alta disponibilidad</div>
<div style="left:1px;top:387px;width:1233px;height:20px;background:#817f85"></div>
<div class="t" style="left:3px;top:391px;color:#dcdce6;font-size:11px">Eventos</div>
<svg style="left:1175px;top:390px" width="56" height="14" viewBox="0 0 56 14"><path d="M3.5 6.5 L12.5 6.5 L8 11 Z" fill="#e8e4dc"/><rect x="25" y="3" width="6" height="5" fill="#e8e4dc"/><rect x="26" y="4" width="2" height="3" fill="#817f85"/><rect x="24" y="8" width="8" height="1" fill="#e8e4dc"/><rect x="27" y="9" width="1" height="3" fill="#e8e4dc"/><path d="M44.3 4.3 L51.2 11.2 M51.2 4.3 L44.3 11.2" stroke="#e8e4dc" stroke-width="0.95"/></svg>
<div style="left:1px;top:407px;width:1233px;height:2px;background:#fff"></div>
<div style="left:1px;top:409px;width:1233px;height:188px;background:#fff;border-top:1px solid #505050;border-left:1px solid #808080;border-right:1px solid #404040;border-bottom:1px solid #404040;box-sizing:border-box"></div>
<div style="left:2px;top:410px;width:1215px;height:23px;background:linear-gradient(#fefefe,#e4e2de);border-bottom:1px solid #3c5058;box-sizing:border-box"></div>
<div style="left:126px;top:411px;width:1px;height:21px;background:#c4c2be"></div>
<div style="left:127px;top:410px;width:1px;height:22px;background:#3c5058"></div>
<div style="left:189px;top:411px;width:1px;height:21px;background:#c4c2be"></div>
<div style="left:190px;top:410px;width:1px;height:22px;background:#3c5058"></div>
<div style="left:315px;top:411px;width:1px;height:21px;background:#c4c2be"></div>
<div style="left:316px;top:410px;width:1px;height:22px;background:#3c5058"></div>
<div style="left:504px;top:411px;width:1px;height:21px;background:#c4c2be"></div>
<div style="left:505px;top:410px;width:1px;height:22px;background:#3c5058"></div>
<div style="left:756px;top:411px;width:1px;height:21px;background:#c4c2be"></div>
<div style="left:757px;top:410px;width:1px;height:22px;background:#3c5058"></div>
<div class="t" style="left:8px;top:416px;font-size:11.5px;color:#101030;letter-spacing:-0.4px">ID</div>
<div class="t" style="left:134px;top:416px;font-size:11.5px;color:#101030;letter-spacing:-0.4px">Secuenci</div>
<div class="t" style="left:197px;top:416px;font-size:11.5px;color:#101030;letter-spacing:-0.4px">Severidad</div>
<div class="t" style="left:323px;top:416px;font-size:11.5px;color:#101030;letter-spacing:-0.4px">Host/Escenario</div>
<div class="t" style="left:512px;top:416px;font-size:11.5px;color:#101030;letter-spacing:-0.4px">Hora</div>
<div class="t" style="left:764px;top:416px;font-size:11.5px;color:#101030;letter-spacing:-0.4px">Evento</div>
<svg style="left:177px;top:416px" width="10" height="9" viewBox="0 0 10 9"><path d="M1 0.5 L9 0.5 M1.5 0.5 L5 7.5 L8.5 0.5" fill="none" stroke="#808080"/></svg>
<div style="left:2px;top:451px;width:1215px;height:1px;background:repeating-linear-gradient(to right,#b4b4b4 0 1px,transparent 1px 2px) 0px 0"></div>
<div style="left:2px;top:478px;width:1215px;height:1px;background:repeating-linear-gradient(to right,#b4b4b4 0 1px,transparent 1px 2px) 0px 0"></div>
<div style="left:2px;top:497px;width:1215px;height:1px;background:repeating-linear-gradient(to right,#b4b4b4 0 1px,transparent 1px 2px) 0px 0"></div>
<div style="left:2px;top:516px;width:1215px;height:1px;background:repeating-linear-gradient(to right,#b4b4b4 0 1px,transparent 1px 2px) 0px 0"></div>
<div style="left:2px;top:535px;width:1215px;height:1px;background:repeating-linear-gradient(to right,#b4b4b4 0 1px,transparent 1px 2px) 0px 0"></div>
<div style="left:2px;top:562px;width:1215px;height:1px;background:repeating-linear-gradient(to right,#b4b4b4 0 1px,transparent 1px 2px) 0px 0"></div>
<div style="left:127px;top:433px;width:1px;height:148px;background:repeating-linear-gradient(to bottom,#b4b4b4 0 1px,transparent 1px 2px) 0 0px"></div>
<div style="left:190px;top:433px;width:1px;height:148px;background:repeating-linear-gradient(to bottom,#b4b4b4 0 1px,transparent 1px 2px) 0 0px"></div>
<div style="left:316px;top:433px;width:1px;height:148px;background:repeating-linear-gradient(to bottom,#b4b4b4 0 1px,transparent 1px 2px) 0 0px"></div>
<div style="left:505px;top:433px;width:1px;height:148px;background:repeating-linear-gradient(to bottom,#b4b4b4 0 1px,transparent 1px 2px) 0 0px"></div>
<div style="left:757px;top:433px;width:1px;height:148px;background:repeating-linear-gradient(to bottom,#b4b4b4 0 1px,transparent 1px 2px) 0 0px"></div>
<div style="left:2px;top:433px;width:1px;height:148px;background:repeating-linear-gradient(to bottom,#c0c0c0 0 1px,transparent 1px 2px) 0 0px"></div>
<div class="t" style="left:5px;top:434px;font-weight:bold;font-size:12px;letter-spacing:0.45px">SR00096</div>
<div class="t" style="left:131px;top:434px;font-weight:bold;font-size:12px;letter-spacing:0.6px">116</div>
<svg style="left:188px;top:431px" width="16" height="20" viewBox="0 0 16 20">
<defs><linearGradient id="ig" x1="0" y1="0" x2="1" y2="1"><stop offset="0" stop-color="#e8ecff"/><stop offset="1" stop-color="#98a4e8"/></linearGradient></defs>
<rect x="6.5" y="2.5" width="4.5" height="3.5" rx="1.5" fill="url(#ig)" stroke="#10208a" stroke-width="1.1"/>
<path d="M5.5 7.5 L10.5 7.5 L10.5 14.5 L12.5 14.5 L12.5 17 L4.5 17 L4.5 14.5 L7.5 14.5 L7.5 10 L5.5 10 Z" fill="url(#ig)" stroke="#10208a" stroke-width="1.1"/></svg>
<div class="t" style="left:209px;top:434px;font-weight:bold;font-size:12px;letter-spacing:-0.15px">Significante</div>
<svg style="left:318px;top:435px" width="16" height="16" viewBox="0 0 16 16">
<rect x="1.5" y="0.5" width="11" height="8" rx="1" fill="#fff" stroke="#606060"/><rect x="2.5" y="1.5" width="8.5" height="5" fill="url(#bl)"/>
<rect x="1.5" y="9.5" width="11" height="3" rx="1" fill="#fff" stroke="#606060"/><line x1="3" y1="11" x2="6" y2="11" stroke="#606060"/>
<path d="M10.5 4.5 L11.6 6.2 L13.6 5.6 L13.2 7.6 L15 8.5 L13.2 9.4 L13.6 11.4 L11.6 10.8 L10.5 12.5 L9.4 10.8 L7.4 11.4 L7.8 9.4 L6 8.5 L7.8 7.6 L7.4 5.6 L9.4 6.2 Z" fill="#fcd020" stroke="#c87800" stroke-width="0.9"/>
<circle cx="10.5" cy="8.5" r="1.2" fill="#a05000"/></svg>
<div class="t" style="left:336px;top:434px;font-weight:bold;font-size:12px;letter-spacing:0.5px">155.35.128.140</div>
<svg style="left:505px;top:431px" width="20" height="20" viewBox="0 0 20 20">
<defs><radialGradient id="cg" cx="0.35" cy="0.35" r="0.7"><stop offset="0" stop-color="#ffe0b0"/><stop offset="1" stop-color="#ff9a18"/></radialGradient></defs>
<circle cx="9.5" cy="10.5" r="6" fill="url(#cg)" stroke="#a05000" stroke-width="1.1"/>
<rect x="8" y="2" width="3" height="1.5" fill="#a05000"/><rect x="9" y="3" width="1" height="1.5" fill="#a05000"/>
<path d="M3.5 4.5 L5.5 6.5 M15.5 4.5 L13.5 6.5" stroke="#a05000" stroke-width="1.1"/>
<path d="M9.5 6 L9.5 10.5 L12.5 10.5" stroke="#502000" stroke-width="1.3" fill="none"/></svg>
<div class="t" style="left:527px;top:434px;font-weight:bold;font-size:12px;letter-spacing:0.55px">01/06/2012 12:22:04</div>
<div class="t" style="left:760px;top:434px;width:457px;overflow:hidden;line-height:13px;font-weight:bold;font-size:12px;">Deteniendo escenario Exchange - MoveIP</div>
<div class="t" style="left:5px;top:453px;font-weight:bold;font-size:12px;letter-spacing:0.45px">SR00202</div>
<div class="t" style="left:131px;top:453px;font-weight:bold;font-size:12px;letter-spacing:0.6px">114</div>
<svg style="left:188px;top:450px" width="16" height="20" viewBox="0 0 16 20">
<defs><linearGradient id="ig" x1="0" y1="0" x2="1" y2="1"><stop offset="0" stop-color="#e8ecff"/><stop offset="1" stop-color="#98a4e8"/></linearGradient></defs>
<rect x="6.5" y="2.5" width="4.5" height="3.5" rx="1.5" fill="url(#ig)" stroke="#10208a" stroke-width="1.1"/>
<path d="M5.5 7.5 L10.5 7.5 L10.5 14.5 L12.5 14.5 L12.5 17 L4.5 17 L4.5 14.5 L7.5 14.5 L7.5 10 L5.5 10 Z" fill="url(#ig)" stroke="#10208a" stroke-width="1.1"/></svg>
<div class="t" style="left:209px;top:453px;font-weight:bold;font-size:12px;letter-spacing:-0.15px">Significante</div>
<svg style="left:320px;top:454px" width="13" height="14" viewBox="0 0 13 14">
<rect x="0.5" y="0.5" width="11.5" height="8" rx="1.2" fill="#fff" stroke="#606060"/><rect x="2" y="2" width="8.5" height="5" fill="url(#bl)"/>
<rect x="0.5" y="9" width="11.5" height="3.8" rx="1.2" fill="#fff" stroke="#606060"/><rect x="2" y="10.5" width="5" height="1" fill="#a0a0a0"/><rect x="7.5" y="10.5" width="3" height="1" fill="#505050"/></svg>
<div class="t" style="left:336px;top:453px;font-weight:bold;font-size:12px;letter-spacing:0.5px">155.35.128.142</div>
<svg style="left:505px;top:450px" width="20" height="20" viewBox="0 0 20 20">
<defs><radialGradient id="cg" cx="0.35" cy="0.35" r="0.7"><stop offset="0" stop-color="#ffe0b0"/><stop offset="1" stop-color="#ff9a18"/></radialGradient></defs>
<circle cx="9.5" cy="10.5" r="6" fill="url(#cg)" stroke="#a05000" stroke-width="1.1"/>
<rect x="8" y="2" width="3" height="1.5" fill="#a05000"/><rect x="9" y="3" width="1" height="1.5" fill="#a05000"/>
<path d="M3.5 4.5 L5.5 6.5 M15.5 4.5 L13.5 6.5" stroke="#a05000" stroke-width="1.1"/>
<path d="M9.5 6 L9.5 10.5 L12.5 10.5" stroke="#502000" stroke-width="1.3" fill="none"/></svg>
<div class="t" style="left:527px;top:453px;font-weight:bold;font-size:12px;letter-spacing:0.55px">01/06/2012 12:20:22</div>
<div class="t" style="left:760px;top:453px;width:457px;overflow:hidden;line-height:13px;font-weight:bold;font-size:12px;">Todas las modificaciones realizadas durante el período de sincronización se han<br>replicado</div>
<div class="t" style="left:5px;top:480px;font-size:11.5px;letter-spacing:-0.35px;">IM00405</div>
<div class="t" style="left:131px;top:480px;font-size:11.5px;letter-spacing:-0.35px;">113</div>
<svg style="left:188px;top:477px" width="16" height="20" viewBox="0 0 16 20">
<defs><linearGradient id="ig" x1="0" y1="0" x2="1" y2="1"><stop offset="0" stop-color="#e8ecff"/><stop offset="1" stop-color="#98a4e8"/></linearGradient></defs>
<rect x="6.5" y="2.5" width="4.5" height="3.5" rx="1.5" fill="url(#ig)" stroke="#10208a" stroke-width="1.1"/>
<path d="M5.5 7.5 L10.5 7.5 L10.5 14.5 L12.5 14.5 L12.5 17 L4.5 17 L4.5 14.5 L7.5 14.5 L7.5 10 L5.5 10 Z" fill="url(#ig)" stroke="#10208a" stroke-width="1.1"/></svg>
<div class="t" style="left:209px;top:480px;font-size:11.5px;letter-spacing:-0.35px;">Informativa</div>
<svg style="left:316px;top:478px" width="18" height="18" viewBox="0 0 18 18">
<rect x="9.5" y="2.5" width="7.5" height="12" rx="1" fill="#fff" stroke="#505050"/>
<line x1="13" y1="5.5" x2="16" y2="5.5" stroke="#505050"/><line x1="13" y1="8.5" x2="16" y2="8.5" stroke="#505050"/><line x1="13" y1="11.5" x2="16" y2="11.5" stroke="#505050"/>
<rect x="2.5" y="5.5" width="10" height="8" rx="1" fill="#fff" stroke="#505050"/>
<defs><linearGradient id="bl" x1="0" y1="0" x2="0" y2="1"><stop offset="0" stop-color="#6a8ae8"/><stop offset="1" stop-color="#0832b8"/></linearGradient></defs>
<rect x="4" y="7" width="7" height="5" fill="url(#bl)"/>
<rect x="2.5" y="13.5" width="10" height="3" rx="1" fill="#fff" stroke="#505050"/><line x1="5" y1="15" x2="10" y2="15" stroke="#707070"/></svg>
<div class="t" style="left:335px;top:480px;font-size:11.5px;letter-spacing:-0.35px;">Exchange - MoveIP</div>
<svg style="left:505px;top:477px" width="20" height="20" viewBox="0 0 20 20">
<defs><radialGradient id="cg" cx="0.35" cy="0.35" r="0.7"><stop offset="0" stop-color="#ffe0b0"/><stop offset="1" stop-color="#ff9a18"/></radialGradient></defs>
<circle cx="9.5" cy="10.5" r="6" fill="url(#cg)" stroke="#a05000" stroke-width="1.1"/>
<rect x="8" y="2" width="3" height="1.5" fill="#a05000"/><rect x="9" y="3" width="1" height="1.5" fill="#a05000"/>
<path d="M3.5 4.5 L5.5 6.5 M15.5 4.5 L13.5 6.5" stroke="#a05000" stroke-width="1.1"/>
<path d="M9.5 6 L9.5 10.5 L12.5 10.5" stroke="#502000" stroke-width="1.3" fill="none"/></svg>
<div class="t" style="left:527px;top:480px;font-size:11.5px;letter-spacing:-0.35px;letter-spacing:-0.1px">01/06/2012 12:20:20</div>
<div class="t" style="left:760px;top:480px;width:457px;overflow:hidden;line-height:13px;font-size:11.5px;letter-spacing:-0.35px;">Enviando el informe Sincronización creado a las '01/06/2012 12:20:20' a Informes</div>
<div class="t" style="left:5px;top:499px;font-weight:bold;font-size:12px;letter-spacing:0.45px">SR00120</div>
<div class="t" style="left:131px;top:499px;font-weight:bold;font-size:12px;letter-spacing:0.6px">111</div>
<svg style="left:188px;top:496px" width="16" height="20" viewBox="0 0 16 20">
<defs><linearGradient id="ig" x1="0" y1="0" x2="1" y2="1"><stop offset="0" stop-color="#e8ecff"/><stop offset="1" stop-color="#98a4e8"/></linearGradient></defs>
<rect x="6.5" y="2.5" width="4.5" height="3.5" rx="1.5" fill="url(#ig)" stroke="#10208a" stroke-width="1.1"/>
<path d="M5.5 7.5 L10.5 7.5 L10.5 14.5 L12.5 14.5 L12.5 17 L4.5 17 L4.5 14.5 L7.5 14.5 L7.5 10 L5.5 10 Z" fill="url(#ig)" stroke="#10208a" stroke-width="1.1"/></svg>
<div class="t" style="left:209px;top:499px;font-weight:bold;font-size:12px;letter-spacing:-0.15px">Significante</div>
<svg style="left:320px;top:500px" width="13" height="14" viewBox="0 0 13 14">
<rect x="0.5" y="0.5" width="11.5" height="8" rx="1.2" fill="#fff" stroke="#606060"/><rect x="2" y="2" width="8.5" height="5" fill="url(#bl)"/>
<rect x="0.5" y="9" width="11.5" height="3.8" rx="1.2" fill="#fff" stroke="#606060"/><rect x="2" y="10.5" width="5" height="1" fill="#a0a0a0"/><rect x="7.5" y="10.5" width="3" height="1" fill="#505050"/></svg>
<div class="t" style="left:336px;top:499px;font-weight:bold;font-size:12px;letter-spacing:0.5px">155.35.128.142</div>
<svg style="left:505px;top:496px" width="20" height="20" viewBox="0 0 20 20">
<defs><radialGradient id="cg" cx="0.35" cy="0.35" r="0.7"><stop offset="0" stop-color="#ffe0b0"/><stop offset="1" stop-color="#ff9a18"/></radialGradient></defs>
<circle cx="9.5" cy="10.5" r="6" fill="url(#cg)" stroke="#a05000" stroke-width="1.1"/>
<rect x="8" y="2" width="3" height="1.5" fill="#a05000"/><rect x="9" y="3" width="1" height="1.5" fill="#a05000"/>
<path d="M3.5 4.5 L5.5 6.5 M15.5 4.5 L13.5 6.5" stroke="#a05000" stroke-width="1.1"/>
<path d="M9.5 6 L9.5 10.5 L12.5 10.5" stroke="#502000" stroke-width="1.3" fill="none"/></svg>
<div class="t" style="left:527px;top:499px;font-weight:bold;font-size:12px;letter-spacing:0.55px">01/06/2012 12:20:20</div>
<div class="t" style="left:760px;top:499px;width:457px;overflow:hidden;line-height:13px;font-weight:bold;font-size:12px;">Sincronización finalizada</div>
<div class="t" style="left:5px;top:518px;font-size:11.5px;letter-spacing:-0.35px;">IR00119</div>
<div class="t" style="left:131px;top:518px;font-size:11.5px;letter-spacing:-0.35px;">110</div>
<svg style="left:188px;top:515px" width="16" height="20" viewBox="0 0 16 20">
<defs><linearGradient id="ig" x1="0" y1="0" x2="1" y2="1"><stop offset="0" stop-color="#e8ecff"/><stop offset="1" stop-color="#98a4e8"/></linearGradient></defs>
<rect x="6.5" y="2.5" width="4.5" height="3.5" rx="1.5" fill="url(#ig)" stroke="#10208a" stroke-width="1.1"/>
<path d="M5.5 7.5 L10.5 7.5 L10.5 14.5 L12.5 14.5 L12.5 17 L4.5 17 L4.5 14.5 L7.5 14.5 L7.5 10 L5.5 10 Z" fill="url(#ig)" stroke="#10208a" stroke-width="1.1"/></svg>
<div class="t" style="left:209px;top:518px;font-size:11.5px;letter-spacing:-0.35px;">Informativa</div>
<svg style="left:320px;top:519px" width="13" height="14" viewBox="0 0 13 14">
<rect x="0.5" y="0.5" width="11.5" height="8" rx="1.2" fill="#fff" stroke="#606060"/><rect x="2" y="2" width="8.5" height="5" fill="url(#bl)"/>
<rect x="0.5" y="9" width="11.5" height="3.8" rx="1.2" fill="#fff" stroke="#606060"/><rect x="2" y="10.5" width="5" height="1" fill="#a0a0a0"/><rect x="7.5" y="10.5" width="3" height="1" fill="#505050"/></svg>
<div class="t" style="left:335px;top:518px;font-size:11.5px;letter-spacing:-0.35px;">155.35.128.142</div>
<svg style="left:505px;top:515px" width="20" height="20" viewBox="0 0 20 20">
<defs><radialGradient id="cg" cx="0.35" cy="0.35" r="0.7"><stop offset="0" stop-color="#ffe0b0"/><stop offset="1" stop-color="#ff9a18"/></radialGradient></defs>
<circle cx="9.5" cy="10.5" r="6" fill="url(#cg)" stroke="#a05000" stroke-width="1.1"/>
<rect x="8" y="2" width="3" height="1.5" fill="#a05000"/><rect x="9" y="3" width="1" height="1.5" fill="#a05000"/>
<path d="M3.5 4.5 L5.5 6.5 M15.5 4.5 L13.5 6.5" stroke="#a05000" stroke-width="1.1"/>
<path d="M9.5 6 L9.5 10.5 L12.5 10.5" stroke="#502000" stroke-width="1.3" fill="none"/></svg>
<div class="t" style="left:527px;top:518px;font-size:11.5px;letter-spacing:-0.35px;letter-spacing:-0.1px">01/06/2012 12:20:20</div>
<div class="t" style="left:760px;top:518px;width:457px;overflow:hidden;line-height:13px;font-size:11.5px;letter-spacing:-0.35px;">El directorio raíz C:/Test3 está sincronizado</div>
<div class="t" style="left:5px;top:537px;font-weight:bold;font-size:12px;letter-spacing:0.45px">SR00139</div>
<div class="t" style="left:131px;top:537px;font-weight:bold;font-size:12px;letter-spacing:0.6px">109</div>
<svg style="left:188px;top:534px" width="16" height="20" viewBox="0 0 16 20">
<defs><linearGradient id="ig" x1="0" y1="0" x2="1" y2="1"><stop offset="0" stop-color="#e8ecff"/><stop offset="1" stop-color="#98a4e8"/></linearGradient></defs>
<rect x="6.5" y="2.5" width="4.5" height="3.5" rx="1.5" fill="url(#ig)" stroke="#10208a" stroke-width="1.1"/>
<path d="M5.5 7.5 L10.5 7.5 L10.5 14.5 L12.5 14.5 L12.5 17 L4.5 17 L4.5 14.5 L7.5 14.5 L7.5 10 L5.5 10 Z" fill="url(#ig)" stroke="#10208a" stroke-width="1.1"/></svg>
<div class="t" style="left:209px;top:537px;font-weight:bold;font-size:12px;letter-spacing:-0.15px">Significante</div>
<svg style="left:318px;top:538px" width="16" height="16" viewBox="0 0 16 16">
<rect x="1.5" y="0.5" width="11" height="8" rx="1" fill="#fff" stroke="#606060"/><rect x="2.5" y="1.5" width="8.5" height="5" fill="url(#bl)"/>
<rect x="1.5" y="9.5" width="11" height="3" rx="1" fill="#fff" stroke="#606060"/><line x1="3" y1="11" x2="6" y2="11" stroke="#606060"/>
<path d="M10.5 4.5 L11.6 6.2 L13.6 5.6 L13.2 7.6 L15 8.5 L13.2 9.4 L13.6 11.4 L11.6 10.8 L10.5 12.5 L9.4 10.8 L7.4 11.4 L7.8 9.4 L6 8.5 L7.8 7.6 L7.4 5.6 L9.4 6.2 Z" fill="#fcd020" stroke="#c87800" stroke-width="0.9"/>
<circle cx="10.5" cy="8.5" r="1.2" fill="#a05000"/></svg>
<div class="t" style="left:336px;top:537px;font-weight:bold;font-size:12px;letter-spacing:0.5px">155.35.128.140</div>
<svg style="left:505px;top:534px" width="20" height="20" viewBox="0 0 20 20">
<defs><radialGradient id="cg" cx="0.35" cy="0.35" r="0.7"><stop offset="0" stop-color="#ffe0b0"/><stop offset="1" stop-color="#ff9a18"/></radialGradient></defs>
<circle cx="9.5" cy="10.5" r="6" fill="url(#cg)" stroke="#a05000" stroke-width="1.1"/>
<rect x="8" y="2" width="3" height="1.5" fill="#a05000"/><rect x="9" y="3" width="1" height="1.5" fill="#a05000"/>
<path d="M3.5 4.5 L5.5 6.5 M15.5 4.5 L13.5 6.5" stroke="#a05000" stroke-width="1.1"/>
<path d="M9.5 6 L9.5 10.5 L12.5 10.5" stroke="#502000" stroke-width="1.3" fill="none"/></svg>
<div class="t" style="left:527px;top:537px;font-weight:bold;font-size:12px;letter-spacing:0.55px">01/06/2012 12:20:16</div>
<div class="t" style="left:760px;top:537px;width:457px;overflow:hidden;line-height:13px;font-weight:bold;font-size:12px;">Iniciando Archivo Sincronización (ignorar los archivos con el mismo tamaño y la m<br>hora de modificación)</div>
<div class="t" style="left:5px;top:564px;font-size:11.5px;letter-spacing:-0.35px;">IR00300</div>
<div class="t" style="left:131px;top:564px;font-size:11.5px;letter-spacing:-0.35px;">108</div>
<svg style="left:188px;top:561px" width="16" height="20" viewBox="0 0 16 20">
<defs><linearGradient id="ig" x1="0" y1="0" x2="1" y2="1"><stop offset="0" stop-color="#e8ecff"/><stop offset="1" stop-color="#98a4e8"/></linearGradient></defs>
<rect x="6.5" y="2.5" width="4.5" height="3.5" rx="1.5" fill="url(#ig)" stroke="#10208a" stroke-width="1.1"/>
<path d="M5.5 7.5 L10.5 7.5 L10.5 14.5 L12.5 14.5 L12.5 17 L4.5 17 L4.5 14.5 L7.5 14.5 L7.5 10 L5.5 10 Z" fill="url(#ig)" stroke="#10208a" stroke-width="1.1"/></svg>
<div class="t" style="left:209px;top:564px;font-size:11.5px;letter-spacing:-0.35px;">Informativa</div>
<svg style="left:320px;top:565px" width="13" height="14" viewBox="0 0 13 14">
<rect x="0.5" y="0.5" width="11.5" height="8" rx="1.2" fill="#fff" stroke="#606060"/><rect x="2" y="2" width="8.5" height="5" fill="url(#bl)"/>
<rect x="0.5" y="9" width="11.5" height="3.8" rx="1.2" fill="#fff" stroke="#606060"/><rect x="2" y="10.5" width="5" height="1" fill="#a0a0a0"/><rect x="7.5" y="10.5" width="3" height="1" fill="#505050"/></svg>
<div class="t" style="left:335px;top:564px;font-size:11.5px;letter-spacing:-0.35px;">155.35.128.142</div>
<svg style="left:505px;top:561px" width="20" height="20" viewBox="0 0 20 20">
<defs><radialGradient id="cg" cx="0.35" cy="0.35" r="0.7"><stop offset="0" stop-color="#ffe0b0"/><stop offset="1" stop-color="#ff9a18"/></radialGradient></defs>
<circle cx="9.5" cy="10.5" r="6" fill="url(#cg)" stroke="#a05000" stroke-width="1.1"/>
<rect x="8" y="2" width="3" height="1.5" fill="#a05000"/><rect x="9" y="3" width="1" height="1.5" fill="#a05000"/>
<path d="M3.5 4.5 L5.5 6.5 M15.5 4.5 L13.5 6.5" stroke="#a05000" stroke-width="1.1"/>
<path d="M9.5 6 L9.5 10.5 L12.5 10.5" stroke="#502000" stroke-width="1.3" fill="none"/></svg>
<div class="t" style="left:527px;top:564px;font-size:11.5px;letter-spacing:-0.35px;letter-spacing:-0.1px">01/06/2012 12:20:14</div>
<div class="t" style="left:760px;top:564px;width:457px;overflow:hidden;line-height:13px;font-size:11.5px;letter-spacing:-0.35px;">Recursos compartidos activados</div>
<div style="left:1217px;top:410px;width:16px;height:171px;background-color:#fff;background-image:repeating-conic-gradient(#d4d0c8 0 25%,#fff 0 50%);background-size:2px 2px"></div>
<div style="left:1217px;top:410px;width:16px;height:16px;box-sizing:border-box;background:#d4d0c8;border:1px solid;border-color:#fff #404040 #404040 #fff;box-shadow:inset -1px -1px #808080"></div>
<svg style="left:1221px;top:415px" width="8" height="6" viewBox="0 0 8 6"><path d="M0 4.5 L7 4.5 L3.5 1 Z" fill="#000"/></svg>
<div style="left:1217px;top:426px;width:16px;height:83px;box-sizing:border-box;background:#d4d0c8;border:1px solid;border-color:#fff #404040 #404040 #fff;box-shadow:inset -1px -1px #808080"></div>
<div style="left:1217px;top:565px;width:16px;height:16px;box-sizing:border-box;background:#d4d0c8;border:1px solid;border-color:#fff #404040 #404040 #fff;box-shadow:inset -1px -1px #808080"></div>
<svg style="left:1221px;top:570px" width="8" height="6" viewBox="0 0 8 6"><path d="M0 1 L7 1 L3.5 4.5 Z" fill="#000"/></svg>
<div style="left:2px;top:581px;width:1215px;height:15px;background-color:#fff;background-image:repeating-conic-gradient(#d4d0c8 0 25%,#fff 0 50%);background-size:2px 2px"></div>
<div style="left:2px;top:581px;width:16px;height:15px;box-sizing:border-box;background:#d4d0c8;border:1px solid;border-color:#fff #404040 #404040 #fff;box-shadow:inset -1px -1px #808080"></div>
<svg style="left:6px;top:585px" width="6" height="9" viewBox="0 0 6 9"><path d="M4.5 0.5 L4.5 7.5 L1 4 Z" fill="#000"/></svg>
<div style="left:18px;top:581px;width:1135px;height:15px;box-sizing:border-box;background:#d4d0c8;border:1px solid;border-color:#fff #404040 #404040 #fff;box-shadow:inset -1px -1px #808080"></div>
<div style="left:1201px;top:581px;width:16px;height:15px;box-sizing:border-box;background:#d4d0c8;border:1px solid;border-color:#fff #404040 #404040 #fff;box-shadow:inset -1px -1px #808080"></div>
<svg style="left:1206px;top:585px" width="6" height="9" viewBox="0 0 6 9"><path d="M1 0.5 L1 7.5 L4.5 4 Z" fill="#000"/></svg>
<div style="left:1217px;top:581px;width:16px;height:15px;background:#d4d0c8"></div>
<div style="left:1px;top:597px;width:1233px;height:23px;background:#e6e4e0"></div>
<div style="left:49px;top:601px;width:453px;height:19px;background:#d8d5d0"></div>
<div style="left:1px;top:599px;width:48px;height:21px;box-sizing:border-box;background:#fff;border:1px solid #000;border-top:none;border-radius:0 0 4px 4px"></div>
<div class="t" style="left:5px;top:604px;font-size:11px;color:#101030;letter-spacing:0.1px">Eventos</div>
<div class="t" style="left:52px;top:604px;font-size:11px;color:#101030;letter-spacing:-0.1px">Resultados de la validación de escenarios</div>
<div style="left:257px;top:601px;width:1px;height:15px;background:#808080"></div>
<div class="t" style="left:261px;top:604px;font-size:11px;color:#101030;letter-spacing:-0.04px">Resultados del cambio en la propiedad aplicados</div>
<div style="left:0px;top:620px;width:1238px;height:9px;background:#d4d0c8"></div>
<div style="left:1237px;top:0px;width:1px;height:629px;background:#505a68"></div>
<div style="left:1238px;top:0px;width:2px;height:629px;background:#3a6ea5"></div></body></html>
